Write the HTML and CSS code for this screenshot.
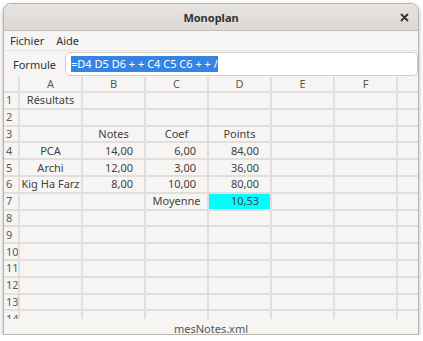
FILE: index.html
```html
<!DOCTYPE html>
<html>
<head>
    <title>Monoplan</title>
    <meta charset="utf-8">
<link rel="stylesheet" href="styles.css">
</head>
<body>
    <div class="window">
        <div class="headerbar">
            <span class="title">Monoplan</span>
            <span class="close">
                <svg width="9" height="9" viewBox="0 0 9 9"><path d="M1.5 1.5 L7.5 7.5 M7.5 1.5 L1.5 7.5" stroke="#2e3436" stroke-width="1.8" stroke-linecap="round"/></svg>
            </span>
        </div>
        <div class="menubar">
            <span class="menu-item">Fichier</span>
            <span class="menu-item">Aide</span>
        </div>
        <div class="formula-bar">
            <label class="formula-label">Formule</label>
            <div class="formula-entry"><span class="selected">=D4 D5 D6 + + C4 C5 C6 + + /</span></div>
        </div>
        <div class="sheet">
            <div class="cell head"></div>
            <div class="cell head">A</div>
            <div class="cell head">B</div>
            <div class="cell head">C</div>
            <div class="cell head">D</div>
            <div class="cell head">E</div>
            <div class="cell head">F</div>
            <div class="cell head"></div>

            <div class="cell rownum">1</div>
            <div class="cell center">Résultats</div>
            <div class="cell"></div><div class="cell"></div><div class="cell"></div><div class="cell"></div><div class="cell"></div><div class="cell"></div>

            <div class="cell rownum">2</div>
            <div class="cell"></div><div class="cell"></div><div class="cell"></div><div class="cell"></div><div class="cell"></div><div class="cell"></div><div class="cell"></div>

            <div class="cell rownum">3</div>
            <div class="cell"></div>
            <div class="cell center">Notes</div>
            <div class="cell center">Coef</div>
            <div class="cell center">Points</div>
            <div class="cell"></div><div class="cell"></div><div class="cell"></div>

            <div class="cell rownum">4</div>
            <div class="cell center">PCA</div>
            <div class="cell num">14,00</div>
            <div class="cell num">6,00</div>
            <div class="cell num">84,00</div>
            <div class="cell"></div><div class="cell"></div><div class="cell"></div>

            <div class="cell rownum">5</div>
            <div class="cell center">Archi</div>
            <div class="cell num">12,00</div>
            <div class="cell num">3,00</div>
            <div class="cell num">36,00</div>
            <div class="cell"></div><div class="cell"></div><div class="cell"></div>

            <div class="cell rownum">6</div>
            <div class="cell center">Kig Ha Farz</div>
            <div class="cell num">8,00</div>
            <div class="cell num">10,00</div>
            <div class="cell num">80,00</div>
            <div class="cell"></div><div class="cell"></div><div class="cell"></div>

            <div class="cell rownum">7</div>
            <div class="cell"></div>
            <div class="cell"></div>
            <div class="cell center">Moyenne</div>
            <div class="cell num result">10,53</div>
            <div class="cell"></div><div class="cell"></div><div class="cell"></div>

            <div class="cell rownum">8</div>
            <div class="cell"></div><div class="cell"></div><div class="cell"></div><div class="cell"></div><div class="cell"></div><div class="cell"></div><div class="cell"></div>
            <div class="cell rownum">9</div>
            <div class="cell"></div><div class="cell"></div><div class="cell"></div><div class="cell"></div><div class="cell"></div><div class="cell"></div><div class="cell"></div>
            <div class="cell rownum">10</div>
            <div class="cell"></div><div class="cell"></div><div class="cell"></div><div class="cell"></div><div class="cell"></div><div class="cell"></div><div class="cell"></div>
            <div class="cell rownum">11</div>
            <div class="cell"></div><div class="cell"></div><div class="cell"></div><div class="cell"></div><div class="cell"></div><div class="cell"></div><div class="cell"></div>
            <div class="cell rownum">12</div>
            <div class="cell"></div><div class="cell"></div><div class="cell"></div><div class="cell"></div><div class="cell"></div><div class="cell"></div><div class="cell"></div>
            <div class="cell rownum">13</div>
            <div class="cell"></div><div class="cell"></div><div class="cell"></div><div class="cell"></div><div class="cell"></div><div class="cell"></div><div class="cell"></div>
            <div class="cell rownum">14</div>
            <div class="cell"></div><div class="cell"></div><div class="cell"></div><div class="cell"></div><div class="cell"></div><div class="cell"></div><div class="cell"></div>
        </div>
        <div class="statusbar">mesNotes.xml</div>
    </div>
</body>
</html>
```

FILE: styles.css
```css
:root {
    --bg-color: #f6f5f4;
    --text-color: #2e3436;
    --cell-text: #424242;
    --grid-line: #e1dfdc;
    --border-color: #b8b2ac;
    --select-bg: #3584e4;
}

body, html {
    margin: 0;
    padding: 0;
    background: #ffffff;
    font-family: "Noto Sans", "DejaVu Sans", sans-serif;
}

.window {
    box-sizing: border-box;
    margin: 3px 0 0 3px;
    width: 416px;
    height: 332px;
    border: 1px solid var(--border-color);
    border-radius: 8px 8px 0 0;
    display: flex;
    flex-direction: column;
    overflow: hidden;
    background: var(--bg-color);
    box-shadow: 0 2px 5px rgba(0, 0, 0, 0.28);
}

.headerbar {
    flex: 0 0 auto;
    height: 26px;
    display: flex;
    align-items: center;
    justify-content: center;
    position: relative;
    background: linear-gradient(#e6e3e0, #dcd8d4);
    border-bottom: 1px solid #c3bdb7;
}

.title {
    font-size: 11px;
    font-weight: bold;
    color: var(--text-color);
}

.close {
    position: absolute;
    right: 9px;
    top: 9px;
    display: flex;
}

.menubar {
    flex: 0 0 auto;
    height: 19px;
    display: flex;
    align-items: center;
    gap: 12px;
    padding-left: 6px;
    font-size: 11px;
    color: var(--text-color);
    border-bottom: 1px solid #e6e4e1;
}

.formula-bar {
    flex: 0 0 auto;
    height: 26px;
    display: flex;
    align-items: center;
}

.formula-label {
    width: 52px;
    padding-left: 9px;
    font-size: 11px;
    color: var(--text-color);
}

.formula-entry {
    flex: 1;
    box-sizing: border-box;
    height: 24px;
    padding-left: 5px;
    display: flex;
    align-items: center;
    background: #ffffff;
    border: 1px solid #d3cdc7;
    border-radius: 5px;
    font-size: 11px;
}

.selected {
    background: var(--select-bg);
    color: #ffffff;
    line-height: 16px;
}

.sheet {
    flex: 1;
    display: grid;
    grid-template-columns: 14px repeat(7, 61px);
    grid-template-rows: 14px;
    grid-auto-rows: 14.8px;
    gap: 2px;
    background: var(--grid-line);
    overflow: hidden;
    font-size: 11px;
    color: var(--cell-text);
}

.cell {
    background: var(--bg-color);
    display: flex;
    align-items: center;
    white-space: nowrap;
    overflow: hidden;
    line-height: 14px;
}

.head {
    justify-content: center;
    color: #5a5a5a;
}

.rownum {
    padding-left: 2px;
    color: #5a5a5a;
}

.center {
    justify-content: center;
}

.num {
    justify-content: flex-end;
    padding-right: 11px;
}

.result {
    background: #00ffff;
}

.statusbar {
    flex: 0 0 auto;
    height: 12px;
    padding-top: 3px;
    display: flex;
    align-items: center;
    justify-content: center;
    font-size: 11px;
    color: #555753;
}
```
